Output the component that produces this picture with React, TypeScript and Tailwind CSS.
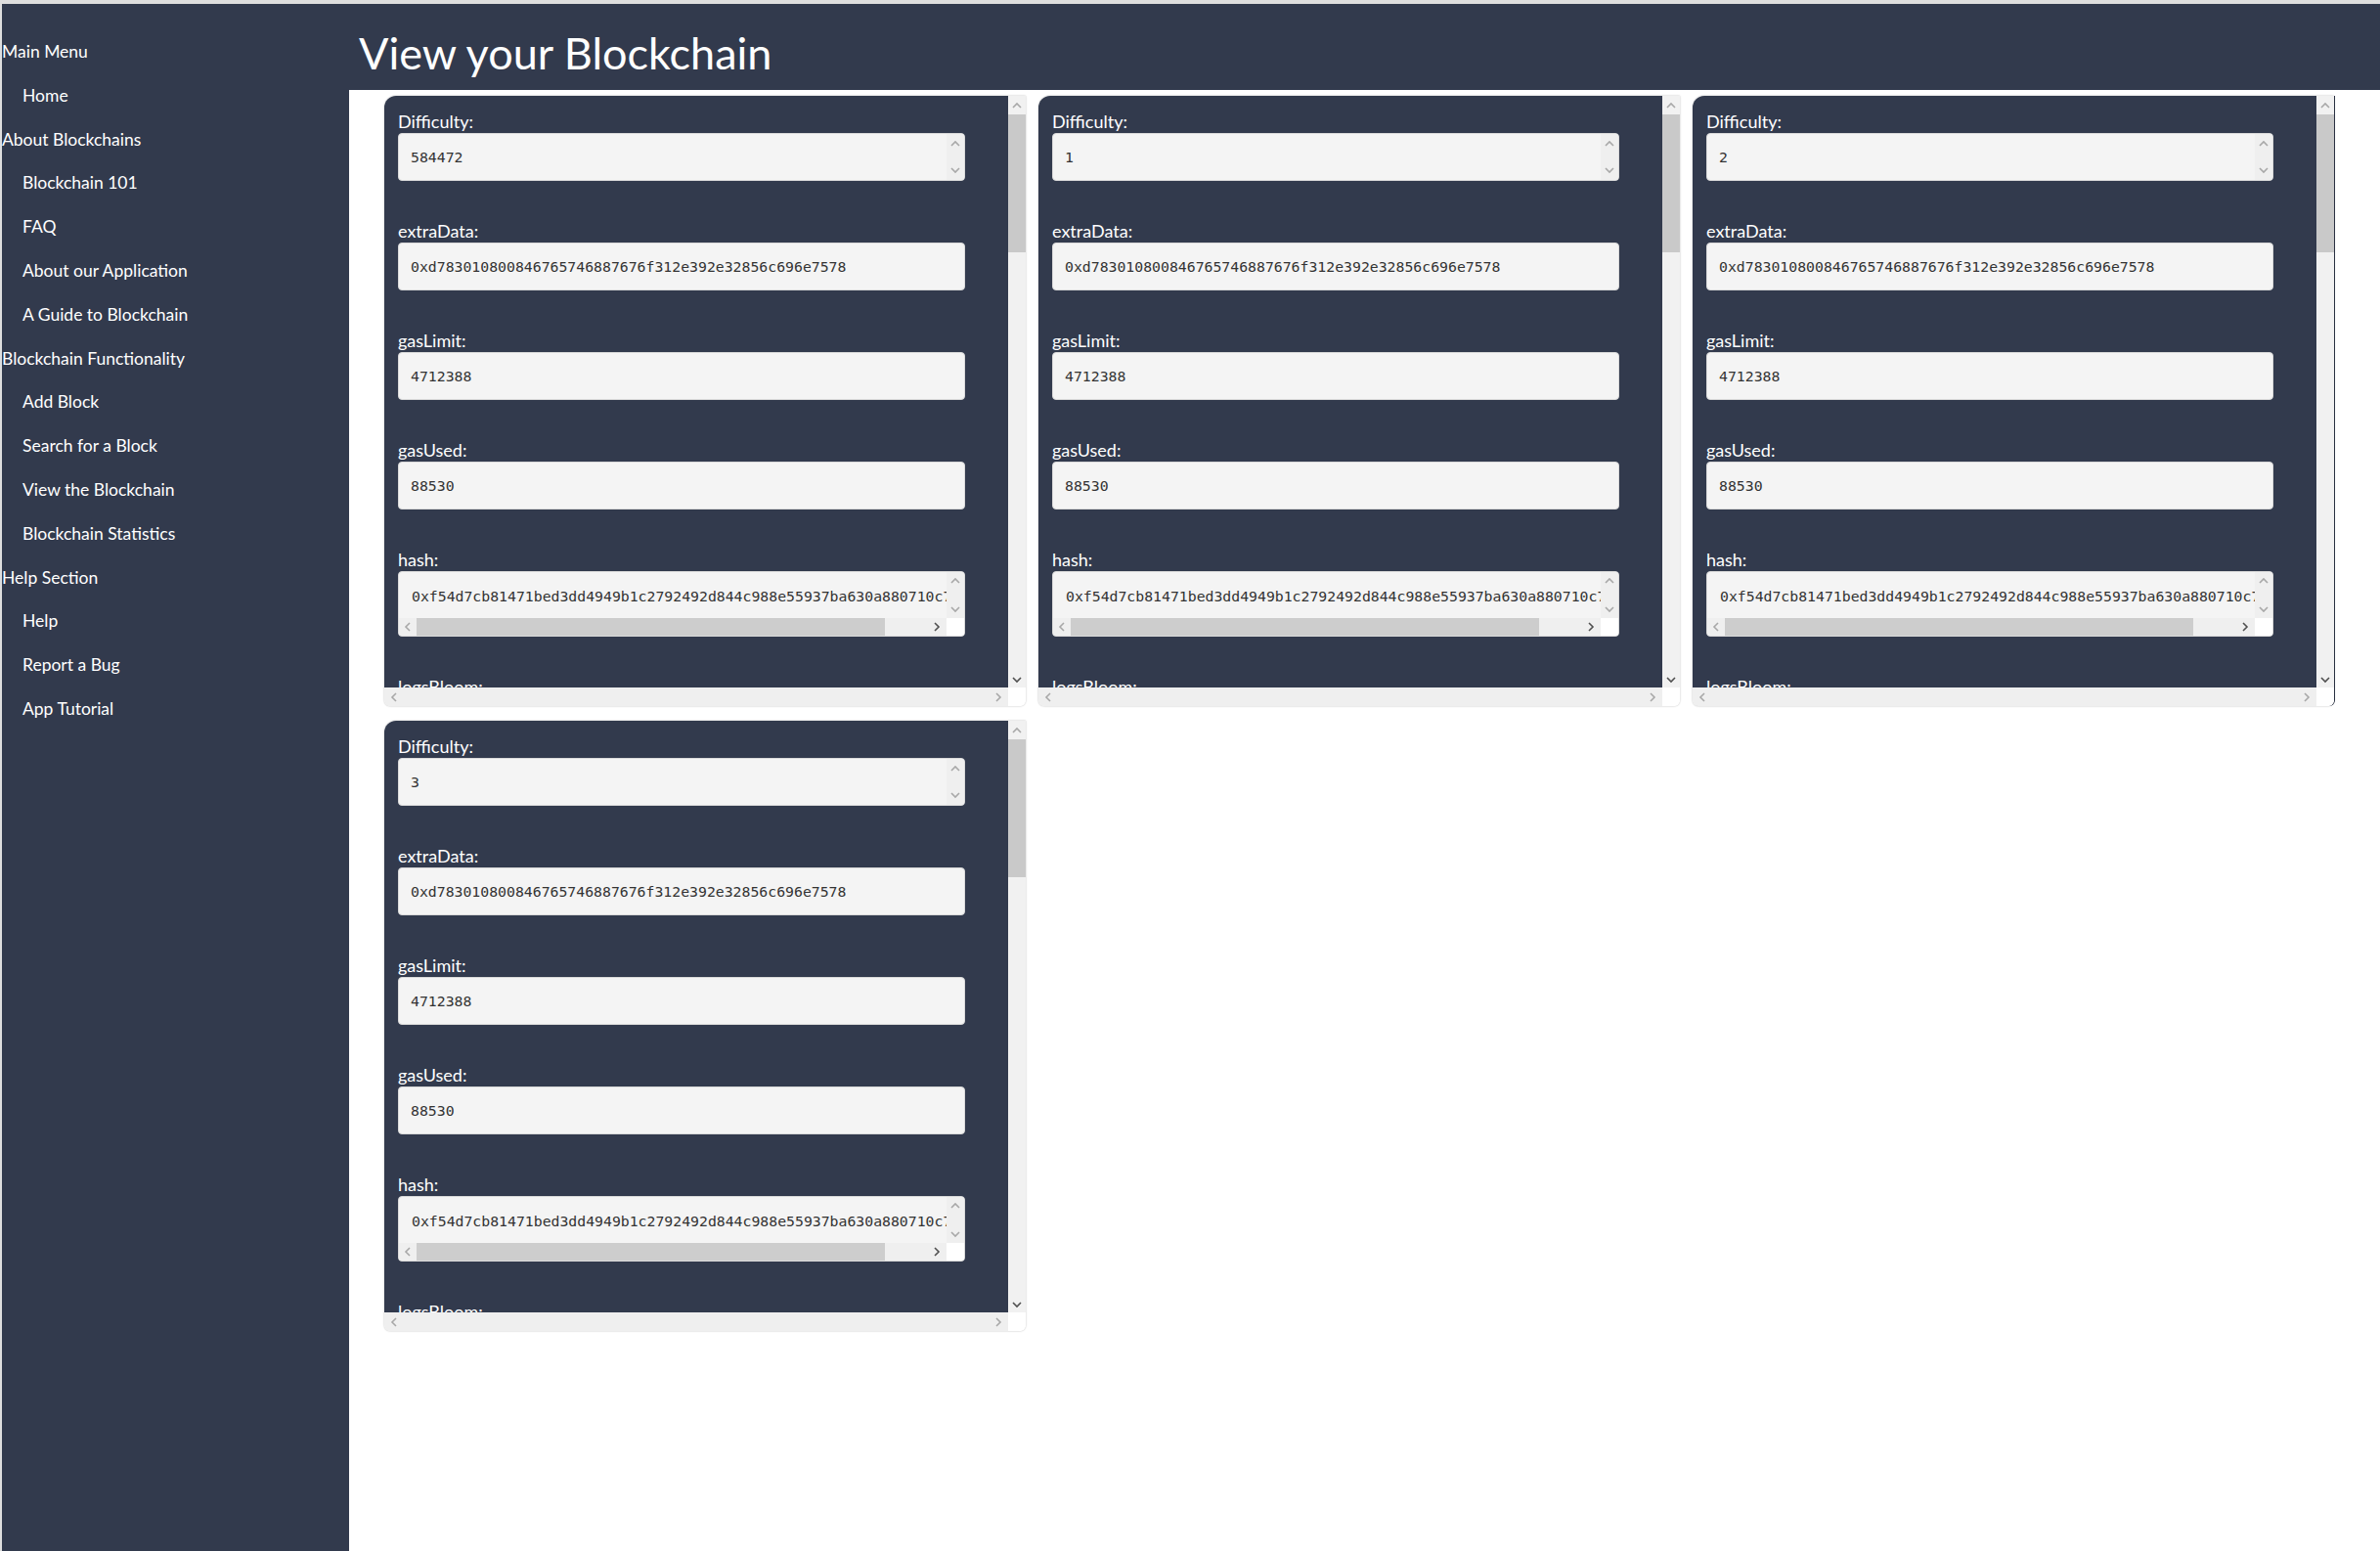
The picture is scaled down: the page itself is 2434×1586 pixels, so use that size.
import React from "react"

type FieldKind = "plain" | "spin" | "wide"
type Field = { label: string; value: string; kind: FieldKind }

const extraData = "0xd783010800846765746887676f312e392e32856c696e7578"
const hash = "0xf54d7cb81471bed3dd4949b1c2792492d844c988e55937ba630a880710c77d2e"

const menu = [
  { title: "Main Menu", items: ["Home"] },
  { title: "About Blockchains", items: ["Blockchain 101", "FAQ", "About our Application", "A Guide to Blockchain"] },
  { title: "Blockchain Functionality", items: ["Add Block", "Search for a Block", "View the Blockchain", "Blockchain Statistics"] },
  { title: "Help Section", items: ["Help", "Report a Bug", "App Tutorial"] },
]

const blockFields = (difficulty: string): Field[] => [
  { label: "Difficulty:", value: difficulty, kind: "spin" },
  { label: "extraData:", value: extraData, kind: "plain" },
  { label: "gasLimit:", value: "4712388", kind: "plain" },
  { label: "gasUsed:", value: "88530", kind: "plain" },
  { label: "hash:", value: hash, kind: "wide" },
  { label: "logsBloom:", value: "0x" + "0".repeat(512), kind: "wide" },
  { label: "miner:", value: "0x0000000000000000000000000000000000000000", kind: "plain" },
]

const Chevron = ({ dir, dark }: { dir: "up" | "down" | "left" | "right"; dark?: boolean }) => {
  const pts = {
    up: "1,6 5,2 9,6",
    down: "1,2 5,6 9,2",
    left: "6,1 2,5 6,9",
    right: "2,1 6,5 2,9",
  }[dir]
  const vertical = dir === "up" || dir === "down"
  return (
    <svg width={vertical ? 10 : 8} height={vertical ? 8 : 10} viewBox={vertical ? "0 0 10 8" : "0 0 8 10"}>
      <polyline points={pts} fill="none" stroke={dark ? "#505050" : "#a8a8a8"} strokeWidth="1.6" />
    </svg>
  )
}

const FieldBox = ({ field }: { field: Field }) => {
  const text = "font-['DejaVu_Sans_Mono',monospace] text-[14.8px] text-[#333333] whitespace-nowrap"
  if (field.kind === "wide") {
    return (
      <div className="flex h-[67px] w-[580px] flex-col overflow-hidden rounded-[4px] border border-[#dadada] bg-[#f4f4f4]">
        <div className="flex h-[48px]">
          <div className={`flex flex-1 items-center overflow-hidden pl-[13px] pt-[2px] ${text}`}>{field.value}</div>
          <div className="flex w-[18px] flex-col items-center justify-between bg-[#efefef] py-[5px]">
            <Chevron dir="up" />
            <Chevron dir="down" />
          </div>
        </div>
        <div className="flex h-[18px]">
          <div className="flex w-[18px] items-center justify-center bg-[#efefef]">
            <Chevron dir="left" />
          </div>
          <div className="w-[479px] bg-[#cdcdcd]" />
          <div className="flex flex-1 items-center justify-end bg-[#efefef] pr-[6px]">
            <Chevron dir="right" dark />
          </div>
          <div className="w-[18px] bg-white" />
        </div>
      </div>
    )
  }
  return (
    <div className="flex h-[49px] w-[580px] overflow-hidden rounded-[4px] border border-[#dadada] bg-[#f4f4f4]">
      <div className={`flex flex-1 items-center pl-[12px] pt-[2px] ${text}`}>{field.value}</div>
      {field.kind === "spin" && (
        <div className="flex w-[18px] flex-col items-center justify-between bg-[#efefef] py-[6px]">
          <Chevron dir="up" />
          <Chevron dir="down" />
        </div>
      )}
    </div>
  )
}

const BlockCard = ({ difficulty, edge }: { difficulty: string; edge?: boolean }) => (
  <div
    className={`flex h-[624px] w-[656px] flex-col overflow-hidden rounded-tl-[12px] rounded-b-[6px] ${
      edge ? "shadow-[1px_0_0_#2a3142,0_0_2px_rgba(0,0,0,0.3)]" : "shadow-[0_0_2px_rgba(0,0,0,0.3)]"
    }`}
  >
    <div className="flex min-h-0 flex-1">
      <div className="min-w-0 flex-1 overflow-hidden bg-[#323a4d] pl-[14px] pt-[14px]">
        {blockFields(difficulty).map((f) => (
          <div key={f.label} className="mb-[39px]">
            <div className="h-[24px] text-[18px] leading-[24px] text-white">{f.label}</div>
            <FieldBox field={f} />
          </div>
        ))}
      </div>
      {/* vertical scrollbar */}
      <div className="flex w-[18px] flex-col bg-[#f1f1f1]">
        <div className="flex h-[19px] items-center justify-center">
          <Chevron dir="up" />
        </div>
        <div className="h-[141px] bg-[#c9c9c9]" />
        <div className="flex-1" />
        <div className="flex h-[17px] items-center justify-center">
          <Chevron dir="down" dark />
        </div>
      </div>
    </div>
    <div className="flex h-[19px]">
      <div className="flex flex-1 items-center justify-between bg-[#efefef] px-[6px]">
        <Chevron dir="left" />
        <Chevron dir="right" />
      </div>
      <div className="w-[18px] bg-white" />
    </div>
  </div>
)

export default function App() {
  return (
    <div className="flex min-h-screen border-l-2 border-t-4 border-[#dedede] bg-white font-['Lato',sans-serif]">
      <aside className="w-[355px] shrink-0 bg-[#323a4d] pt-[27px] text-[17.5px] text-white">
        {menu.map((group) => (
          <div key={group.title}>
            <div className="leading-[44.8px]">{group.title}</div>
            {group.items.map((item) => (
              <div key={item} className="pl-[21px] leading-[44.8px]">
                {item}
              </div>
            ))}
          </div>
        ))}
      </aside>
      <main className="flex-1">
        <header className="h-[88px] bg-[#323a4d] pl-[10px] pt-[23px]">
          <h1 className="text-[45px] leading-[55px] text-white">View your Blockchain</h1>
        </header>
        <div className="grid grid-cols-[repeat(3,656px)] gap-x-[13px] gap-y-[15px] pl-[36px] pt-[6px]">
          {["584472", "1", "2", "3"].map((d, i) => (
            <BlockCard key={d} difficulty={d} edge={i === 2} />
          ))}
        </div>
      </main>
    </div>
  )
}
